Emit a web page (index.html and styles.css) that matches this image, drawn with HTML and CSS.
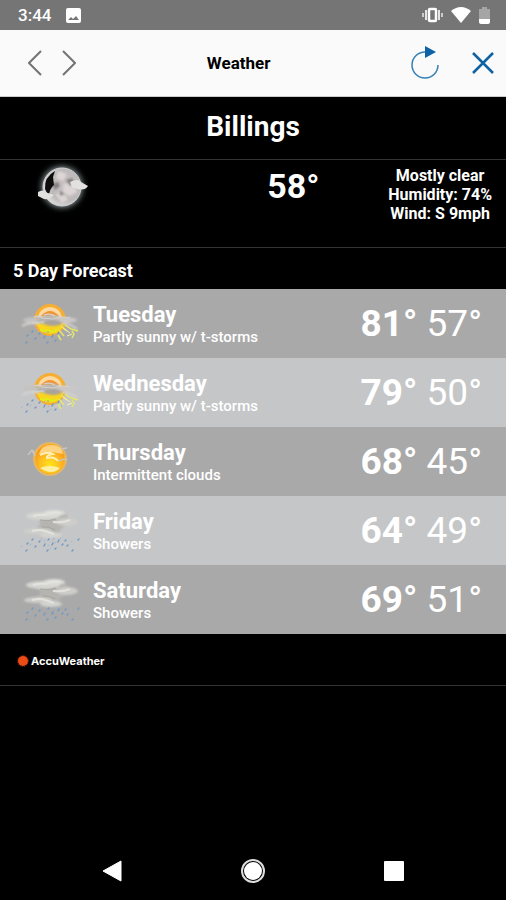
FILE: index.html
```html
<!DOCTYPE html>
<html lang="en">
<head>
<meta charset="utf-8">
<meta name="viewport" content="width=device-width, initial-scale=1">
<title>Weather</title>
<link rel="stylesheet" href="styles.css">
</head>
<body>
<svg class="sprite" aria-hidden="true">
  <defs>
    <radialGradient id="sun-fill" cx="50%" cy="70%" r="60%">
      <stop offset="0" stop-color="#ffe51a"/>
      <stop offset=".6" stop-color="#fdba20"/>
      <stop offset="1" stop-color="#f7961c"/>
    </radialGradient>
    <radialGradient id="moon-fill" cx="60%" cy="45%" r="60%">
      <stop offset="0" stop-color="#c8c2c3"/>
      <stop offset=".7" stop-color="#bdb8b9"/>
      <stop offset="1" stop-color="#dededf"/>
    </radialGradient>
    <filter id="soft" x="-20%" y="-20%" width="140%" height="140%"><feGaussianBlur stdDeviation=".7"/></filter>
    <filter id="haze" x="-20%" y="-40%" width="140%" height="180%"><feGaussianBlur stdDeviation="1.2"/></filter>
    <filter id="glow" x="-50%" y="-50%" width="200%" height="200%"><feGaussianBlur stdDeviation="3"/></filter>
  </defs>
  <symbol id="rain" viewBox="0 0 60 18">
    <g stroke="#6f98c2" stroke-width="1.4" stroke-linecap="round">
      <path d="M8 8l-1 1M13 4l-1 1M16 11l-1 1M7 15l-1 1M20 6l-1 1M25 9l-1 2M29 4l-1 1M33 8l-1 2M28 15l-1 1M39 5l-1 2M43 9l-1 1M36 13l-1 1M46 5l-1 1M48 10l-1 1M53 15l-1 1M59 4l-1 1"/>
    </g>
    <g stroke="#9eb2d2" stroke-width="1" stroke-linecap="round">
      <path d="M2 11l-1 1M11 9l-1 1M22 3l-1 1M25 5l-1 1M29 10l-1 1M34 3l-1 2M36 7l-1 1M41 3l-1 1M31 13l-1 1M52 6l-1 1"/>
    </g>
  </symbol>
  <symbol id="storm" viewBox="0 0 60 48">
    <g filter="url(#soft)">
      <circle cx="30" cy="20" r="16" fill="#f6ad32"/>
      <circle cx="30" cy="19" r="12" fill="#fbd9a0"/>
      <path d="M21 16q9-10 18 0z" fill="#f49332"/>
      <path d="M17 23h27q-3 11-14 11t-13-11z" fill="#fbd51d"/>
    </g>
    <g filter="url(#haze)">
      <ellipse cx="16" cy="20" rx="13" ry="3" fill="#c4c2c0"/>
      <ellipse cx="30" cy="20" rx="13" ry="5" fill="#b9b6b2"/>
      <ellipse cx="46" cy="20" rx="11" ry="3" fill="#cac8c7"/>
      <ellipse cx="33" cy="23" rx="9" ry="3" fill="#a8a29b"/>
      <path d="M2 26q8-5 17-2M43 24q8 0 14 5" fill="none" stroke="#d5d3d2" stroke-width="2"/>
    </g>
    <g filter="url(#soft)">
      <path d="M14 17q6-2 8 1l11 1 9-2 8 1M24 15q6-2 11 1M12 23l12-1" fill="none" stroke="#d4d2cf" stroke-width="1.2"/>
    </g>
    <svg x="0" y="27" width="42" height="18" viewBox="0 0 42 18"><use href="#rain" width="60" height="18"/></svg>
    <path d="M41 26l6 5M45 25l6 4 7 2M39 30l5 6M52 31l2 3-2 4M38 35l3 5" fill="none" stroke="#e5e568" stroke-width="1.5"/>
    <path d="M43 28l7 5M47 36l5-2" fill="none" stroke="#f3f2b2"/>
    <path d="M20 30l4 1 3-1 5 2 5-2" fill="none" stroke="#e2ec18" stroke-width="2"/>
  </symbol>
  <symbol id="intermittent" viewBox="0 0 60 48">
    <circle cx="30" cy="21" r="17" fill="#fcc057" opacity=".65" filter="url(#soft)"/>
    <circle cx="30" cy="21" r="15" fill="url(#sun-fill)" stroke="#ffb21c"/>
    <g filter="url(#soft)">
      <path d="M19 16q2-9 12-9 11 0 12 9l-11-2q-7-1-13 2z" fill="#ffe09a" opacity=".8"/>
      <path d="M20 17q8-4 13-1-7 1-6 4 7-2 11 3" fill="none" stroke="#fff0b8" stroke-width="2"/>
      <path d="M20 30q10-4 20 0-8 8-20 0z" fill="#fff0a1"/>
      <path d="M8 17l4-5 3 3M12 12l3 6M41 11l6-1M39 23q5-3 8-1" fill="none" stroke="#c8c5be" stroke-width="1.500"/>
    </g>
  </symbol>
  <symbol id="showers" viewBox="0 0 60 48">
    <g filter="url(#haze)">
      <path d="M14 8q18-4 33 0l2 8-8 6-4 6H23l-8-6 6-5z" fill="#b5b4b0"/>
      <ellipse cx="23" cy="9" rx="17" ry="4" fill="#d5d5d1"/>
      <ellipse cx="34" cy="6" rx="11" ry="3" fill="#deded9"/>
      <ellipse cx="47" cy="15" rx="11" ry="4" fill="#cecdca"/>
      <ellipse cx="18" cy="24" rx="14" ry="3" fill="#cfcfcb"/>
      <ellipse cx="31" cy="28" rx="11" ry="3" fill="#d3d3cf"/>
    </g>
    <g filter="url(#soft)" fill="none">
      <path d="M13 9q7-2 13-1 7-4 14-2M33 15q10 1 17-2M12 24q8-2 13 0l9 3" stroke="#e2e2de" stroke-width="2"/>
      <path d="M20 13q8 2 16-1M22 20q7-1 13 3" stroke="#a6a5a0"/>
    </g>
    <use href="#rain" x="0" y="28" width="60" height="18"/>
  </symbol>
</svg>

<div class="phone">
  <header>
    <div class="status">
      <div class="status-side">
        <span>3:44</span>
        <svg width="15" height="15" viewBox="0 0 15 15" aria-hidden="true"><rect width="15" height="15" rx="2" fill="#fff"/><path d="M2 12l3-3 2 2 3-3 3 4z" fill="#757575"/></svg>
      </div>
      <div class="status-side status-icons">
        <svg width="21" height="16" viewBox="0 0 21 16" aria-hidden="true"><path d="M4 3v10M17 3v10" stroke="#e5e5e5" stroke-width="2"/><path d="M1 6v4M20 6v4" stroke="#ccc" stroke-width="2"/><rect x="7" y="2" width="7" height="12" rx="1" fill="#757575" stroke="#fff" stroke-width="2.500"/></svg>
        <svg width="20" height="16" viewBox="0 0 20 16" aria-hidden="true"><path d="M0 4Q10-4 20 4L10 16z" fill="#fff"/></svg>
        <svg width="11" height="17" viewBox="0 0 11 17" aria-hidden="true"><path d="M3 0h5v2h3v11H0V2h3z" fill="#a5a5a5"/><path d="M0 12h11v3q0 2-2 2H2q-2 0-2-2z" fill="#fff"/></svg>
      </div>
    </div>
    <div class="appbar">
      <div class="tools">
        <button class="tool" aria-label="Back"><svg width="14" height="26" viewBox="0 0 14 26"><path d="M13 1L1 13l12 12" fill="none" stroke="#737373" stroke-width="2"/></svg></button>
        <button class="tool" aria-label="Forward"><svg width="14" height="26" viewBox="0 0 14 26"><path d="M1 1l12 12L1 25" fill="none" stroke="#737373" stroke-width="2"/></svg></button>
      </div>
      <h1>Weather</h1>
      <div class="tools tools-end">
        <button class="tool" aria-label="Refresh"><svg width="28" height="34" viewBox="0 0 28 34"><path d="M14 6A13 13 0 1 0 27 19" fill="none" stroke="#3680b4" stroke-width="1.500"/><path d="M14 0l11 6-11 6z" fill="#0e62a4"/></svg></button>
        <button class="tool" aria-label="Close"><svg width="22" height="22" viewBox="0 0 22 22"><path d="M1 1l20 20M21 1L1 21" stroke="#0e62a4" stroke-width="2.500"/></svg></button>
      </div>
    </div>
  </header>

  <main>
    <h2 class="city">Billings</h2>
    <section class="current">
      <svg class="moon" width="54" height="54" viewBox="0 0 54 54" role="img" aria-label="Mostly clear">
        <circle cx="26" cy="27" r="20" fill="#a2adb0" filter="url(#glow)"/>
        <circle cx="26" cy="27" r="19" fill="url(#moon-fill)" stroke="#d0d2d3"/>
        <g filter="url(#haze)">
          <path d="M22 11l9 3-4 7-7-3zM28 24l9-1 4 9-7 4-7-4zM19 34l9-1 4 7-6 3z" fill="#ddd6d6"/>
          <path d="M30 20l6-2 3 6-5 2zM16 24l6-2 2 4-5 4zM24 31l5 3-5 2z" fill="#837e80"/>
        </g>
        <g filter="url(#soft)">
          <path d="M19 11Q8 17 9 29l4 8q0-8 5-12l-1-8z" fill="#111"/>
          <path d="M34 22q8-4 11 0l7 4q-3 5-11 3l-5-2zM2 32q5-3 7 0l9 3q-5 5-10 4l-6-3z" fill="#e2e1e0"/>
        </g>
      </svg>
      <p class="now">58°</p>
      <p class="details">Mostly clear<br>Humidity: 74%<br>Wind: S 9mph</p>
    </section>

    <h2 class="heading">5 Day Forecast</h2>
    <ul class="days">
      <li class="day">
        <svg class="icon" aria-hidden="true"><use href="#storm"/></svg>
        <div class="label"><h3>Tuesday</h3><p>Partly sunny w/ t-storms</p></div>
        <p class="temps"><b>81°</b> <span>57°</span></p>
      </li>
      <li class="day">
        <svg class="icon" aria-hidden="true"><use href="#storm"/></svg>
        <div class="label"><h3>Wednesday</h3><p>Partly sunny w/ t-storms</p></div>
        <p class="temps"><b>79°</b> <span>50°</span></p>
      </li>
      <li class="day">
        <svg class="icon" aria-hidden="true"><use href="#intermittent"/></svg>
        <div class="label"><h3>Thursday</h3><p>Intermittent clouds</p></div>
        <p class="temps"><b>68°</b> <span>45°</span></p>
      </li>
      <li class="day">
        <svg class="icon" aria-hidden="true"><use href="#showers"/></svg>
        <div class="label"><h3>Friday</h3><p>Showers</p></div>
        <p class="temps"><b>64°</b> <span>49°</span></p>
      </li>
      <li class="day">
        <svg class="icon" aria-hidden="true"><use href="#showers"/></svg>
        <div class="label"><h3>Saturday</h3><p>Showers</p></div>
        <p class="temps"><b>69°</b> <span>51°</span></p>
      </li>
    </ul>
    <div class="credit">
      <svg width="12" height="12" viewBox="0 0 12 12" aria-hidden="true"><circle cx="6" cy="6" r="5" fill="#ee4c16"/><circle cx="6" cy="6" r="5.300" fill="none" stroke="#c43c12" stroke-dasharray="1 1"/></svg>
      <span>AccuWeather</span>
    </div>
  </main>

  <nav class="system" aria-label="System">
    <button class="tool" aria-label="Back"><svg width="20" height="22" viewBox="0 0 20 22"><path d="M19 1v20L1 11z" fill="#fff" stroke="#fff" stroke-linejoin="round"/></svg></button>
    <button class="tool" aria-label="Home"><svg width="24" height="24" viewBox="0 0 24 24"><circle cx="12" cy="12" r="11" fill="none" stroke="#ddd" stroke-width="2"/><circle cx="12" cy="12" r="9" fill="#fff"/></svg></button>
    <button class="tool" aria-label="Overview"><svg width="20" height="20" viewBox="0 0 20 20"><rect width="20" height="20" rx="1" fill="#fff"/></svg></button>
  </nav>
</div>
</body>
</html>
```

FILE: styles.css
```css
* { box-sizing: border-box; }

body, h1, h2, h3, p, ul { margin: 0; padding: 0; }

body {
  background: #000;
  color: #fff;
  font-family: Roboto, "Liberation Sans", sans-serif;
}

svg { display: block; }

.sprite {
  position: absolute;
  width: 0;
  height: 0;
}

.phone {
  display: flex;
  flex-direction: column;
  min-height: 100vh;
}

.status {
  display: flex;
  align-items: center;
  justify-content: space-between;
  height: 30px;
  padding: 0 16px 0 18px;
  background: #757575;
  font-size: 17px;
  font-weight: 500;
}

.status-side {
  display: flex;
  align-items: center;
  gap: 15px;
}

.status-icons { gap: 8px; }

.appbar {
  display: grid;
  grid-template-columns: 4fr auto 5fr;
  align-items: center;
  height: 67px;
  padding: 0 12px 0 28px;
  border-bottom: 1px solid #ccc;
  background: #fafafa;
  color: #000;
}

.appbar h1 {
  font-size: 17px;
  font-weight: 700;
}

.tools {
  display: flex;
  align-items: center;
  gap: 20px;
}

.tools-end {
  justify-content: flex-end;
  gap: 33px;
}

.tool {
  padding: 0;
  border: 0;
  background: none;
}

.city {
  padding: 11px 12px 13px;
  border-bottom: 1px solid #333;
  font-size: 28px;
  line-height: 38px;
  font-weight: 700;
  text-align: center;
}

.current {
  display: grid;
  grid-template-columns: 6fr 7fr auto;
  height: 88px;
  padding: 0 14px 0 36px;
  border-bottom: 1px solid #333;
}

.now {
  padding-top: 8px;
  font-size: 34px;
  line-height: 36px;
  font-weight: 700;
  text-align: center;
}

.details {
  padding-top: 6px;
  font-size: 16px;
  line-height: 19px;
  font-weight: 700;
  text-align: center;
}

.heading {
  padding: 14px 13px 10px;
  font-size: 18px;
  line-height: 17px;
  font-weight: 700;
}

.days { list-style: none; }

.day {
  display: flex;
  align-items: center;
  height: 69px;
  padding: 0 24px 0 20px;
  background: #a9a9a9;
}

.day:nth-child(even) { background: #c5c6c8; }

.icon {
  width: 60px;
  height: 48px;
}

.label {
  flex: 1;
  padding: 2px 0 0 13px;
}

.label h3 {
  font-size: 22px;
  line-height: 24px;
  font-weight: 700;
}

.label p {
  font-size: 15px;
  line-height: 20px;
  font-weight: 500;
}

.temps {
  font-size: 37px;
  line-height: 40px;
  font-weight: 400;
}

.temps b { font-weight: 700; }

.credit {
  display: flex;
  align-items: center;
  gap: 2px;
  height: 52px;
  padding: 2px 17px 0;
  border-bottom: 1px solid #333;
  font-family: Inter, "Liberation Sans", sans-serif;
  font-size: 11px;
  font-weight: 700;
}

.system {
  display: flex;
  align-items: center;
  justify-content: space-around;
  height: 58px;
  margin-top: auto;
  padding: 0 42px;
}
```
